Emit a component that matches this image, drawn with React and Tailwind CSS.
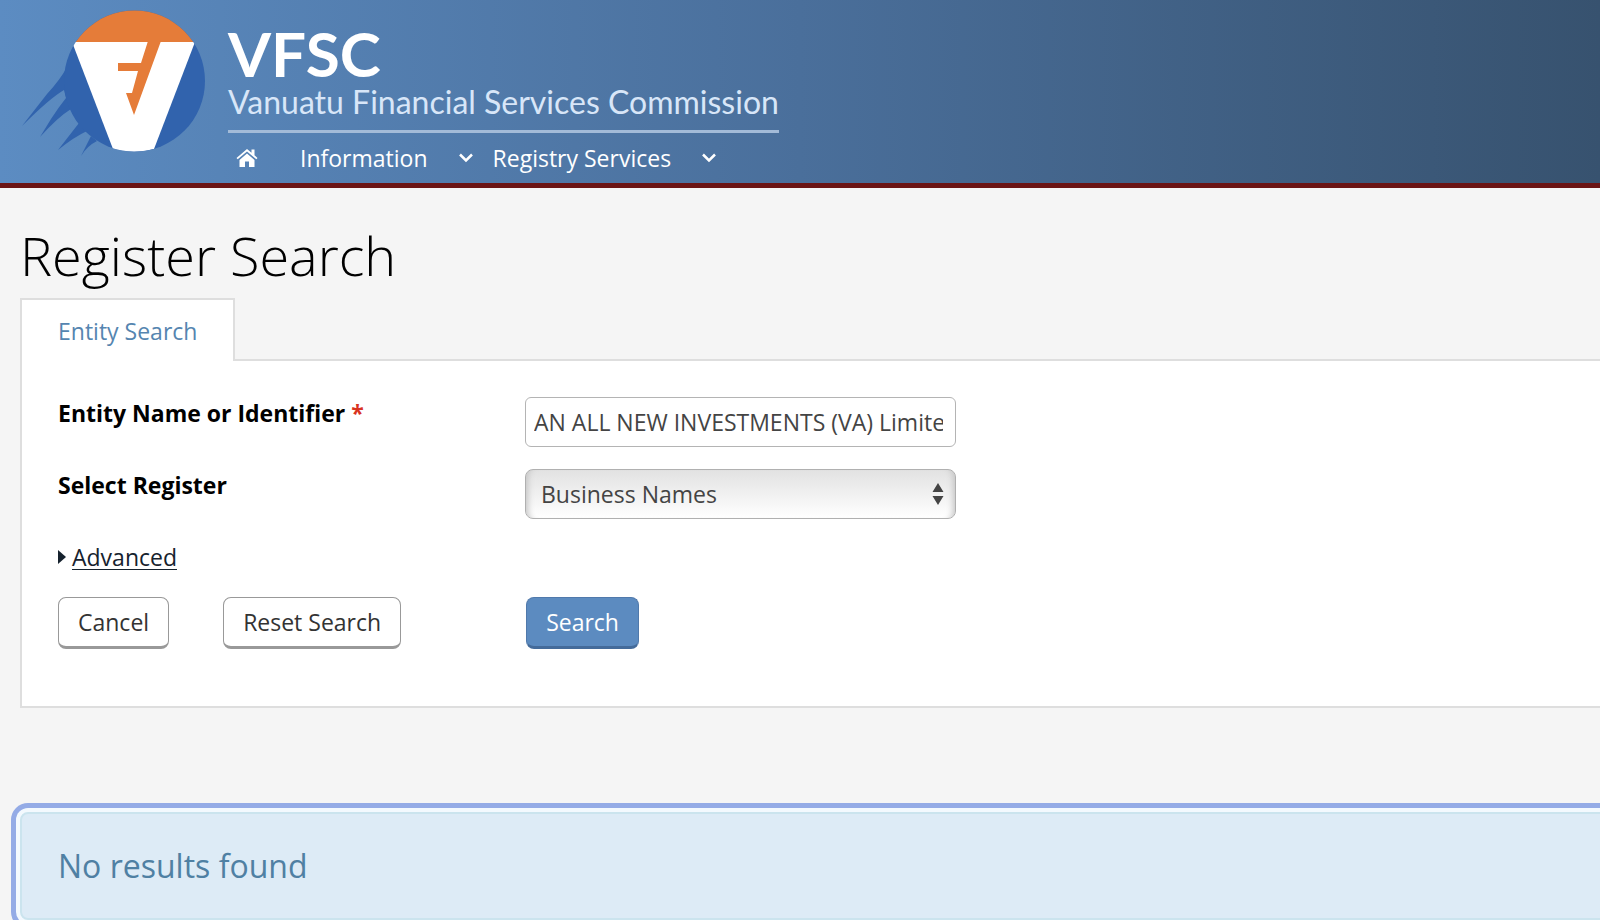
import { useState } from 'react'

function Logo() {
  return (
    <svg width="190" height="150" viewBox="18 6 190 150" role="img" aria-label="VFSC logo" className="shrink-0">
      <defs>
        <clipPath id="disc">
          <circle cx="134.5" cy="81" r="70.5" />
        </clipPath>
      </defs>
      <g fill="#3163ad">
        <path d="M67 67 Q60 80 47 94 L22 126 Q50 98 64 90 L66 98 Q58 108 51 119 L40 137 Q58 117 71 109 Z" />
        <path d="M79 123 L58 150 Q74 137 87 131 Z" />
        <path d="M91 136 L81 156 Q87 146 97 141 Z" />
        <circle cx="134.5" cy="81" r="70.5" />
      </g>
      <g clipPath="url(#disc)">
        <rect x="60" y="6" width="150" height="36" fill="#e57c39" />
        <path d="M72 42 H195 L154 149 Q134 155 113 149 Z" fill="#fff" />
      </g>
      <path d="M148 41 H161 L134 115 L126 93 H132 L138 71 H118 V63 H141 Z" fill="#e57c39" />
    </svg>
  )
}

function HomeIcon() {
  return (
    <svg width="22" height="20" viewBox="0 0 22 20" fill="#fff">
      <path d="M11 5.500 L3.500 12 V19 H9 V13.500 H13 V19 H18.500 V12 Z" />
      <path d="M11 1 L0.500 10 L1.700 11.300 L11 3.500 L20.300 11.300 L21.500 10 L18.500 7.300 V1.500 H15.500 V4.800 Z" />
    </svg>
  )
}

function Chevron() {
  return (
    <svg width="14" height="10" viewBox="0 0 14 10" fill="none" stroke="#fff" strokeWidth="2.5">
      <path d="M1 1.500 L7 7.500 L13 1.500" />
    </svg>
  )
}

export default function App() {
  const [name, setName] = useState('AN ALL NEW INVESTMENTS (VA) Limited')
  const [register, setRegister] = useState('business')

  const reset = () => {
    setName('')
    setRegister('business')
  }

  return (
    <div className="min-h-screen overflow-hidden bg-[#f5f5f5] text-[23px] leading-8 font-['Open_Sans',sans-serif]">
      <header className="flex h-[188px] border-b-5 border-[#6b1414] bg-linear-to-r from-[#5c8cc2] via-[#4a6f9b] to-[#37526f] pl-[18px] pt-[6px] text-white">
        <Logo />
        <div className="ml-5 pt-4">
          <div className="w-fit border-b-3 border-[#a3bbd8] pb-[10px]">
            <p className="font-['Lato',sans-serif] text-[62px] leading-[62px] font-bold">VFSC</p>
            <p className="whitespace-nowrap font-['Lato',sans-serif] text-[32px] leading-[36px] text-[#d8e6f8]">
              Vanuatu Financial Services Commission
            </p>
          </div>
          <nav className="flex items-center pt-[9px] pl-2">
            <a href="#home" aria-label="Home"><HomeIcon /></a>
            <a href="#information" className="ml-[42px] flex items-center gap-[31px]">Information <Chevron /></a>
            <a href="#services" className="ml-5 flex items-center gap-[31px]">Registry Services <Chevron /></a>
          </nav>
        </div>
      </header>

      <main className="pl-5">
        <h1 className="pt-[29px] pb-[5px] text-[54px] leading-[76px] font-light text-black">Register Search</h1>

        <div className="flex">
          <button type="button" className="h-[63px] border-2 border-b-0 border-[#dedede] bg-white px-9 text-[#5585b0]">
            Entity Search
          </button>
          <div className="flex-1 border-b-2 border-[#dedede]" />
        </div>

        <form
          onSubmit={e => e.preventDefault()}
          className="border-b-2 border-l-2 border-[#dedede] bg-white pt-9 pb-[57px] pl-9"
        >
          <div className="flex">
            <label htmlFor="entity" className="w-[467px] font-bold text-black">
              Entity Name or Identifier <span className="text-[#d9331f]">*</span>
            </label>
            <input
              id="entity"
              type="text"
              value={name}
              onChange={e => setName(e.target.value)}
              className="h-[50px] w-[431px] rounded-md border border-[#b4b4b4] bg-white pr-3 pl-2 text-[#444]"
            />
          </div>

          <div className="mt-[22px] flex">
            <label htmlFor="register" className="w-[467px] font-bold text-black">Select Register</label>
            <div className="relative">
              <select
                id="register"
                value={register}
                onChange={e => setRegister(e.target.value)}
                className="h-[50px] w-[431px] appearance-none rounded-lg border border-[#b0b0b0] bg-linear-to-b from-[#e2e2e2] to-white px-[15px] text-[#444] shadow-[inset_8px_0_6px_-6px_#c4c4c4,inset_-8px_0_6px_-6px_#c4c4c4]"
              >
                <option value="business">Business Names</option>
                <option value="companies">Companies</option>
              </select>
              <svg width="12" height="22" viewBox="0 0 12 22" fill="#444" className="pointer-events-none absolute top-[14px] right-3">
                <path d="M6 0 L11.500 9 H0.500 Z M6 22 L0.500 13 H11.500 Z" />
              </svg>
            </div>
          </div>

          <a href="#advanced" className="mt-[22px] flex w-fit items-center gap-[6px] text-[#16222e]">
            <svg width="8" height="14" viewBox="0 0 8 14" fill="#16222e">
              <path d="M0 0 L8 7 L0 14 Z" />
            </svg>
            <span className="underline decoration-1 underline-offset-3">Advanced</span>
          </a>

          <div className="mt-6 flex">
            <button type="button" className="h-[52px] rounded-lg border border-b-3 border-[#999] bg-white px-[19px] text-[#333]">
              Cancel
            </button>
            <button type="button" onClick={reset} className="ml-[54px] h-[52px] rounded-lg border border-b-3 border-[#999] bg-white px-[19px] text-[#333]">
              Reset Search
            </button>
            <button type="submit" className="ml-[125px] h-[52px] rounded-lg border border-b-3 border-[#5079ab] border-b-[#446b9a] bg-[#5c8bc0] px-[19px] text-white">
              Search
            </button>
          </div>
        </form>

        <div
          role="status"
          className="mt-[104px] -mr-5 rounded-lg border-2 border-[#cbe4ee] bg-[#ddebf6] py-8 pl-9 text-[32px] leading-[40px] text-[#4f80a3] shadow-[0_0_0_4px_#f3f9fe,0_0_0_9px_#94abe6]"
        >
          No results found
        </div>
      </main>
    </div>
  )
}
